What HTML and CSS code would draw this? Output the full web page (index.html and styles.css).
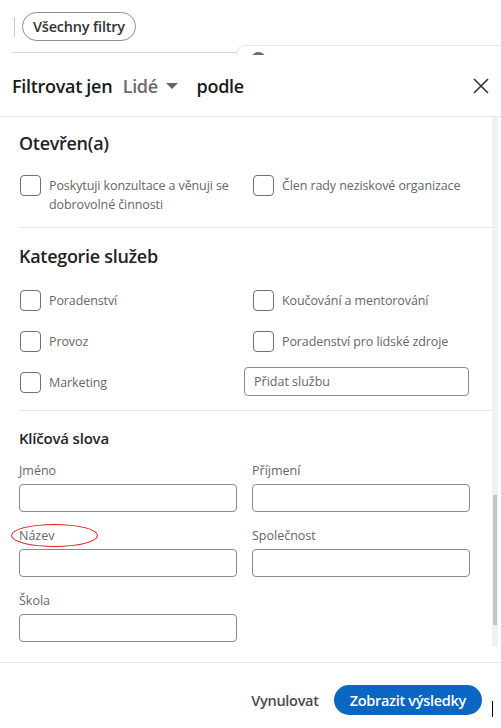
FILE: index.html
```html
<!DOCTYPE html>
<html lang="cs">

<head>
   <meta charset="UTF-8">
   <meta name="viewport" content="width=device-width, initial-scale=1.0">
   <title>Všechny filtry</title>
   <link rel="stylesheet" href="styles.css">
</head>

<body>
   <!-- Page behind the filter panel -->
   <div class="page-bg">
       <div class="toolbar">
           <span class="toolbar-sep"></span>
           <button class="pill">Všechny filtry</button>
       </div>
       <div class="bg-row">
           <div class="bg-line"></div>
           <div class="bg-card"><span class="bg-avatar"></span></div>
       </div>
   </div>

   <div class="panel">
       <div class="panel-head">
           <h2 class="panel-title">
               Filtrovat jen
               <span class="type-select">Lidé
                   <svg width="12" height="7" viewBox="0 0 12 7"><path d="M0 0h12L6 6z" fill="#666"/></svg>
               </span>
               podle
           </h2>
           <button class="close-btn" aria-label="Zavřít">
               <svg width="18" height="18" viewBox="0 0 18 18"><path d="M2 2l14 14M16 2L2 16" stroke="#333" stroke-width="1.6" fill="none"/></svg>
           </button>
       </div>

       <div class="panel-body">
           <div class="scroll-content">
               <section class="group group-first">
                   <h3>Otevřen(a)</h3>
                   <div class="options">
                       <label class="option"><span class="box"></span><span class="text">Poskytuji konzultace a věnuji se dobrovolné činnosti</span></label>
                       <label class="option"><span class="box"></span><span class="text">Člen rady neziskové organizace</span></label>
                   </div>
               </section>

               <section class="group group-services">
                   <h3>Kategorie služeb</h3>
                   <div class="options">
                       <label class="option"><span class="box"></span><span class="text">Poradenství</span></label>
                       <label class="option"><span class="box"></span><span class="text">Koučování a mentorování</span></label>
                       <label class="option"><span class="box"></span><span class="text">Provoz</span></label>
                       <label class="option"><span class="box"></span><span class="text">Poradenství pro lidské zdroje</span></label>
                       <label class="option"><span class="box"></span><span class="text">Marketing</span></label>
                       <input class="add-service" type="text" placeholder="Přidat službu">
                   </div>
               </section>

               <section class="group group-keywords">
                   <h4>Klíčová slova</h4>
                   <div class="fields">
                       <div class="field"><label>Jméno</label><input type="text"></div>
                       <div class="field"><label>Příjmení</label><input type="text"></div>
                       <div class="field"><label class="marked">Název</label><input type="text"></div>
                       <div class="field"><label>Společnost</label><input type="text"></div>
                       <div class="field"><label>Škola</label><input type="text"></div>
                   </div>
               </section>
           </div>
           <div class="scroll-track"><div class="scroll-thumb"></div></div>
       </div>

       <div class="panel-foot">
           <button class="reset-btn">Vynulovat</button>
           <button class="show-btn">Zobrazit výsledky</button>
           <span class="cursor"></span>
       </div>
   </div>
</body>

</html>
```

FILE: styles.css
```css
body {
    margin: 0;
    font-family: "Open Sans", "Noto Sans", Arial, sans-serif;
    color: #1f1f1f;
    background: #fff;
    overflow: hidden;
}

button {
    font-family: inherit;
    cursor: pointer;
}

/* Page behind the panel */
.page-bg {
    height: 55px;
    overflow: hidden;
}

.toolbar {
    display: flex;
    align-items: center;
    height: 29px;
    padding: 12px 0 0 14px;
}

.toolbar-sep {
    width: 1px;
    height: 20px;
    background-color: #c8c8c8;
    margin-right: 7px;
}

.pill {
    height: 29px;
    padding: 0 10px;
    border: 1px solid #8c8c8c;
    border-radius: 15px;
    background: #fff;
    font-size: 14.5px;
    font-weight: 600;
    color: #333;
    letter-spacing: -0.2px;
}

.bg-row {
    display: flex;
    height: 14px;
}

.bg-line {
    width: 224px;
    margin-left: 12px;
    height: 11px;
    border-bottom: 1px solid #dcdcdc;
}

.bg-card {
    flex: 1;
    margin-top: 4px;
    border-top: 1px solid #e3e3e3;
    border-left: 1px solid #e3e3e3;
    border-top-left-radius: 9px;
    padding: 6px 0 0 14px;
}

.bg-avatar {
    display: block;
    width: 15px;
    height: 15px;
    border-radius: 50%;
    background-color: #6a6a6a;
}

/* Filter panel */
.panel-head {
    display: flex;
    align-items: center;
    justify-content: space-between;
    height: 61px;
    padding: 0 10px 0 12px;
    border-bottom: 1px solid #e6e6e6;
}

.panel-title {
    margin: 0;
    font-size: 18px;
    font-weight: 600;
    letter-spacing: -0.3px;
    color: #1a1a1a;
}

.type-select {
    color: #6b6b6b;
    margin: 0 14px 0 6px;
}

.type-select svg {
    margin-left: 4px;
    vertical-align: 3px;
}

.close-btn {
    background: none;
    border: none;
    padding: 0;
    width: 20px;
    height: 20px;
    display: flex;
    align-items: center;
    justify-content: center;
}

.panel-body {
    display: flex;
    height: 545px;
}

.scroll-content {
    flex: 1;
    overflow: hidden;
    padding-left: 19px;
}

.scroll-track {
    width: 6px;
    height: 530px;
    margin-right: 3px;
    background-color: #f1f1f1;
}

.scroll-thumb {
    width: 4px;
    height: 130px;
    margin: 378px 0 0 1px;
    background-color: #c4c4c4;
}

.group {
    border-bottom: 1px solid #e8e8e8;
    padding: 16px 0 17px;
}

.group-first {
    padding: 14px 0 13px;
}

.group h3 {
    margin: 0 0 20px;
    font-size: 18px;
    line-height: 24px;
    font-weight: 600;
    letter-spacing: -0.3px;
}

.group-services h3 {
    margin-bottom: 22px;
}

.options {
    display: grid;
    grid-template-columns: 233px 1fr;
    row-gap: 20px;
}

.option {
    display: flex;
    align-items: flex-start;
    gap: 8px;
}

.box {
    flex: none;
    width: 21px;
    height: 21px;
    box-sizing: border-box;
    border: 1.5px solid #707070;
    border-radius: 4px;
    margin-left: 1px;
}

.option .text {
    font-size: 12.5px;
    line-height: 19px;
    color: #666;
    padding-top: 1px;
    letter-spacing: -0.1px;
}

.add-service {
    width: 225px;
    height: 29px;
    box-sizing: border-box;
    margin: -5px 0 -4px -8px;
    padding: 0 9px;
    border: 1px solid #8a8a8a;
    border-radius: 4px;
    font-family: inherit;
    font-size: 12.5px;
}

.add-service::placeholder {
    color: #666;
}

.group-keywords {
    padding-top: 17px;
    border-bottom: none;
}

.group h4 {
    margin: 0 0 14px;
    font-size: 15px;
    line-height: 20px;
    font-weight: 600;
    letter-spacing: -0.2px;
}

.fields {
    display: grid;
    grid-template-columns: 233px 1fr;
    row-gap: 15px;
}

.field label {
    display: block;
    font-size: 12.5px;
    line-height: 18px;
    color: #666;
    margin-bottom: 4px;
}

.field input {
    display: block;
    width: 218px;
    height: 28px;
    box-sizing: border-box;
    border: 1px solid #8a8a8a;
    border-radius: 4px;
}

/* Red annotation around a label */
.marked {
    position: relative;
}

.marked::after {
    content: "";
    position: absolute;
    left: -8px;
    top: -3px;
    width: 85px;
    height: 21px;
    border: 1.5px solid #e0201c;
    border-radius: 50%;
}

.panel-foot {
    display: flex;
    align-items: center;
    justify-content: flex-end;
    height: 56px;
    padding-top: 9px;
    border-top: 1px solid #e8e8e8;
}

.reset-btn {
    background: none;
    border: none;
    padding: 0;
    font-size: 14.5px;
    font-weight: 600;
    color: #4a4a4a;
    letter-spacing: -0.3px;
    margin-right: 15px;
}

.show-btn {
    height: 30px;
    padding: 0 16px;
    border: none;
    border-radius: 15px;
    background-color: #0a66c2;
    color: #fff;
    font-size: 14.5px;
    font-weight: 600;
    letter-spacing: -0.3px;
}

.cursor {
    width: 1px;
    height: 16px;
    margin: 17px 8px 0 10px;
    background-color: #000;
}
```
